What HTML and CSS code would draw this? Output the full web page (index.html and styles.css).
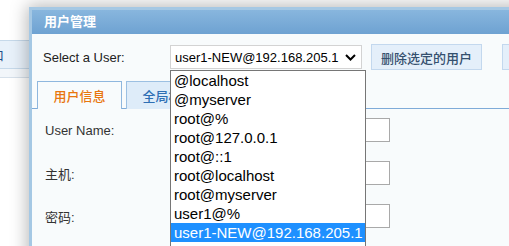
FILE: index.html
```html
<!DOCTYPE html>
<html>
<head>
<meta charset="utf-8">
<link rel="stylesheet" href="styles.css">
</head>
<body>
<div class="page">
  <div class="bg-bar"><span class="bg-glyph">口</span></div>
  <div class="bg-bar2"></div>

  <div class="dialog">
    <div class="dlg-title">用户管理</div>
    <div class="dlg-body">
      <div class="row-top">
        <div class="lbl-select">Select a User:</div>
        <div class="select-wrap">
          <div class="select-box">
            <span class="select-text">user1-NEW@192.168.205.1</span>
            <svg class="chev" width="11" height="7" viewBox="0 0 11 7"><path d="M1 1 L5.5 5.5 L10 1" fill="none" stroke="#000" stroke-width="2"/></svg>
          </div>
          <div class="listbox">
            <div class="opt">@localhost</div>
            <div class="opt">@myserver</div>
            <div class="opt">root@%</div>
            <div class="opt">root@127.0.0.1</div>
            <div class="opt">root@::1</div>
            <div class="opt">root@localhost</div>
            <div class="opt">root@myserver</div>
            <div class="opt">user1@%</div>
            <div class="opt sel">user1-NEW@192.168.205.1</div>
            <div class="opt">user2@%</div>
          </div>
        </div>
        <div class="btn">删除选定的用户</div>
        <div class="btn btn2"></div>
      </div>

      <div class="tabs">
        <div class="tab active">用户信息</div>
        <div class="tab">全局权限</div>
      </div>

      <div class="form">
        <div class="frow"><div class="flbl">User Name:</div><div class="finput"></div></div>
        <div class="frow"><div class="flbl">主机:</div><div class="finput"></div></div>
        <div class="frow"><div class="flbl">密码:</div><div class="finput"></div></div>
      </div>
    </div>
  </div>
</div>
</body>
</html>
```

FILE: styles.css
```css
html, body {
  margin: 0;
  padding: 0;
  background: #ffffff;
  overflow: hidden;
}
body {
  font-family: "Liberation Sans", Arial, "Noto Sans CJK SC", sans-serif;
  font-size: 13px;
  color: #333;
}
.page {
  position: relative;
  width: 509px;
  height: 246px;
  overflow: hidden;
}
.bg-bar {
  margin-top: 40px;
  height: 27px;
  background: #e8f1fa;
  border-top: 1px solid #c6d9ea;
  border-bottom: 1px solid #c6d9ea;
  display: flex;
  align-items: center;
}
.bg-glyph {
  margin-left: -9px;
  color: #1f4f8a;
  font-family: "Noto Sans CJK SC", sans-serif;
  font-size: 13px;
}
.bg-bar2 {
  height: 8px;
  background: #f2f6fa;
  border-bottom: 1px solid #d6e0ea;
}
.dialog {
  position: absolute;
  left: 29px;
  top: 7px;
  width: 520px;
  height: 280px;
  border: 3px solid #a5c8e4;
  background: #f8fbfc;
  box-shadow: 0 0 16px 2px rgba(0, 0, 0, 0.28);
  display: flex;
  flex-direction: column;
}
.dlg-title {
  height: 24px;
  background: linear-gradient(#88b6de, #6ea2d2);
  color: #fff;
  font-family: "Noto Sans CJK SC", sans-serif;
  font-weight: bold;
  font-size: 13px;
  line-height: 22px;
  padding-left: 12px;
}
.dlg-body {
  flex: 1;
  background: #f8fbfc;
  padding: 10px 0 0 0;
}
.row-top {
  display: flex;
  align-items: flex-end;
  padding-left: 11px;
}
.lbl-select {
  flex-shrink: 0;
  width: 127px;
  height: 23px;
  line-height: 23px;
  color: #222;
}
.select-wrap {
  position: relative;
  flex-shrink: 0;
}
.select-box {
  box-sizing: border-box;
  width: 192px;
  height: 24px;
  border: 1px solid #d3d3d3;
  background: #fff;
  display: flex;
  align-items: center;
  padding-left: 4px;
  color: #000;
  font-size: 13px;
}
.select-text {
  flex: 1;
}
.chev {
  margin-right: 5px;
}
.listbox {
  position: absolute;
  left: 0;
  top: 25px;
  width: 196px;
  box-sizing: border-box;
  border: 1px solid #767676;
  background: #fff;
  z-index: 5;
}
.opt {
  font-size: 15px;
  line-height: 19px;
  height: 19px;
  padding-left: 3px;
  color: #000;
  white-space: nowrap;
}
.opt.sel {
  background: #1e90ff;
  color: #fff;
}
.btn {
  flex-shrink: 0;
  box-sizing: border-box;
  margin-left: 9px;
  height: 26px;
  width: 111px;
  border: 1px solid #c3d8ee;
  background: #e4effa;
  color: #34506e;
  font-family: "Noto Sans CJK SC", sans-serif;
  font-weight: 500;
  font-size: 13px;
  display: flex;
  align-items: center;
  justify-content: center;
  margin-bottom: -1px;
}
.btn2 {
  margin-left: 20px;
  width: 80px;
}
.tabs {
  margin-top: 12px;
  display: flex;
  gap: 4px;
  padding-left: 5px;
  border-bottom: 1px solid #7fabd8;
  height: 27px;
}
.tab {
  box-sizing: border-box;
  width: 85px;
  height: 28px;
  border: 1px solid #9cc0e2;
  border-bottom: none;
  background: #deecf9;
  color: #2e6fb4;
  font-family: "Noto Sans CJK SC", sans-serif;
  font-weight: 500;
  font-size: 13px;
  display: flex;
  align-items: center;
  justify-content: center;
}
.tab.active {
  background: #f8fbfc;
  color: #e8760e;
  border-color: #8fb7de;
}
.form {
  padding-top: 9px;
  padding-left: 13px;
  display: flex;
  flex-direction: column;
  gap: 19px;
}
.frow {
  display: flex;
  align-items: center;
  height: 24px;
}
.flbl {
  width: 205px;
  color: #333;
  font-family: "Liberation Sans", "Noto Sans CJK SC", sans-serif;
}
.finput {
  box-sizing: border-box;
  width: 140px;
  height: 24px;
  border: 1px solid #a9a9a9;
  background: #fff;
}
```
